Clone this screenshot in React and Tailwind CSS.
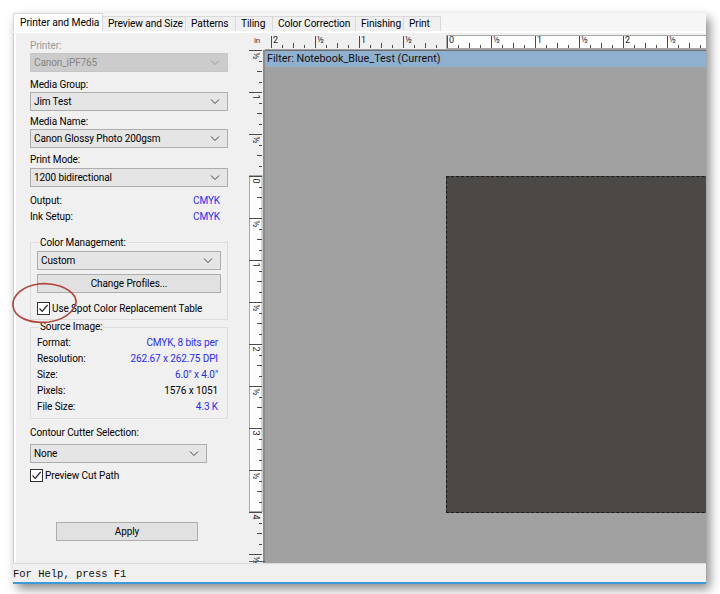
import React from 'react';

function Chevron({ color = '#404040' }) {
  return (
    <svg width="10" height="6" viewBox="0 0 10 6" className="shrink-0">
      <path d="M1 0.5 L5 4.5 L9 0.5" fill="none" stroke={color} strokeWidth="1" />
    </svg>
  );
}

function Combo({ value, disabled, className = '' }) {
  return (
    <div
      className={`flex h-[19px] items-center justify-between border pl-[3px] pr-[7px] ${
        disabled ? 'border-[#c6c6c6] bg-[#cccccc] text-[#858585]' : 'border-[#adadad] bg-[#e5e5e5] text-black'
      } ${className}`}
    >
      <span>{value}</span>
      <Chevron color={disabled ? '#9a9a9a' : '#404040'} />
    </div>
  );
}

function Check() {
  return (
    <div className="flex h-[13px] w-[13px] shrink-0 items-center justify-center border border-[#333333] bg-white">
      <svg width="11" height="11" viewBox="0 0 11 11">
        <path d="M1.5 5.5 L4.2 8.3 L9.6 2" fill="none" stroke="#222" strokeWidth="1.2" />
      </svg>
    </div>
  );
}

function Row({ label, value, blue }) {
  return (
    <div className="flex h-[16px] items-center justify-between">
      <span>{label}</span>
      <span className={blue ? 'text-[#2b2bf5]' : 'text-black'}>{value}</span>
    </div>
  );
}

function TopRuler() {
  const zero = 182;
  const step = 11;
  const items = [];
  for (let k = -16; k <= 23; k++) {
    const x = zero + k * step + 0.5;
    const major = k % 4 === 0;
    const quarter = k % 2 === 0;
    const h = major ? 12 : quarter ? 5 : 3;
    items.push(<line key={'t' + k} x1={x} x2={x} y1={15 - h} y2={15} stroke="#4a4a4a" strokeWidth="1" />);
    if (major) {
      const label = k % 8 === 0 ? String(Math.abs(k / 8)) : '½';
      items.push(
        <text key={'l' + k} x={x + 1.5} y={10} fontSize="9" fill="#222">
          {label}
        </text>
      );
    }
  }
  return (
    <svg width="441" height="17" className="block">
      <rect x="0" y="0" width="441" height="17" fill="#f0f0f0" />
      <rect x={zero - 0.5} y="2.5" width="270" height="13" fill="#ffffff" stroke="#a8a8a8" strokeWidth="1" />
      {items}
      <line x1="0" x2="441" y1="16.5" y2="16.5" stroke="#a0a0a0" />
    </svg>
  );
}

function SideRuler() {
  const zero = 126;
  const step = 10.5;
  const items = [];
  for (let k = -12; k <= 36; k++) {
    const y = Math.round(zero + k * step) + 0.5;
    const major = k % 4 === 0;
    const quarter = k % 2 === 0;
    const len = major ? 13 : quarter ? 5 : 3;
    items.push(<line key={'t' + k} x1={13 - len} x2={13} y1={y} y2={y} stroke="#4a4a4a" strokeWidth="1" />);
    if (major) {
      const label = k % 8 === 0 ? String(Math.abs(k / 8)) : '½';
      items.push(
        <text key={'l' + k} x={0} y={0} fontSize="9" fill="#222" transform={`translate(4 ${y + 2}) rotate(90)`}>
          {label}
        </text>
      );
    }
  }
  return (
    <svg width="16" height="513" className="block shrink-0">
      <rect x="0" y="0" width="16" height="513" fill="#f0f0f0" />
      <rect x="0.5" y={zero - 0.5} width="12.5" height="336" fill="#ffffff" stroke="#a8a8a8" strokeWidth="1" />
      {items}
      <rect x="14" y="0" width="2" height="513" fill="#8c8c8c" />
      <line x1="0" x2="16" y1="511.5" y2="511.5" stroke="#5a5a5a" />
    </svg>
  );
}

const tabs = ['Preview and Size', 'Patterns', 'Tiling', 'Color Correction', 'Finishing', 'Print'];
const tabWidths = ['w-[83px]', 'w-[50px]', 'w-[37px]', 'w-[83px]', 'w-[48px]', 'w-[37px]'];

export default function App() {
  return (
    <div className="relative h-[594px] w-[720px] overflow-hidden bg-white pl-[13px] pt-[13px] font-['Roboto',sans-serif] text-[10px] tracking-[-0.1px] text-black">
      <div className="flex h-[571px] w-[693px] flex-col bg-[#f0f0f0] shadow-[4px_5px_10px_rgba(0,0,0,0.45)]">
        {/* Tabs */}
        <div className="flex h-[18px] shrink-0 items-start whitespace-nowrap bg-[#f6f6f6]">
          <div className="flex h-[18px] w-[90px] items-center border-x border-t border-[#d9d9d9] bg-white pl-[6px] text-[10.3px]">
            Printer and Media
          </div>
          {tabs.map((t, i) => (
            <div
              key={t}
              className={`mt-[3px] flex h-[15px] ${tabWidths[i]} items-center border-r border-t border-[#d9d9d9] bg-[#f0f0f0] pl-[5px] text-[10.2px]`}
            >
              {t}
            </div>
          ))}
        </div>
        <div className="h-[2px] shrink-0 bg-white" />

        {/* Body */}
        <div className="flex h-[530px] shrink-0 border-l border-[#d0d0d0]">
          {/* Left panel */}
          <div className="flex w-[235px] flex-col border-l-2 border-white pl-[14px]">
            <div className="w-[198px]">
              <div className="mt-[5px] flex h-[15px] items-center text-[#9a9a9a]">Printer:</div>
              <Combo value="Canon_iPF765" disabled />
              <div className="mt-[5px] flex h-[15px] items-center">Media Group:</div>
              <Combo value="Jim Test" />
              <div className="mt-[3px] flex h-[15px] items-center">Media Name:</div>
              <Combo value="Canon Glossy Photo 200gsm" />
              <div className="mt-[4px] flex h-[15px] items-center">Print Mode:</div>
              <Combo value="1200 bidirectional" className="mt-[1px]" />

              <div className="mt-[5px] pr-[8px]">
                <Row label="Output:" value="CMYK" blue />
                <Row label="Ink Setup:" value="CMYK" blue />
              </div>

              <fieldset className="mt-[11px] border border-[#dcdcdc] px-[6px] pb-[3px]">
                <legend className="ml-[2px] h-[15px] px-[1px] leading-[15px]">Color Management:</legend>
                <Combo value="Custom" className="mt-[1px]" />
                <div className="mt-[4px] flex h-[19px] items-center justify-center border border-[#adadad] bg-[#e1e1e1]">
                  Change Profiles...
                </div>
                <div className="mt-[8px] flex h-[15px] items-center gap-[2px]">
                  <Check />
                  <span>Use Spot Color Replacement Table</span>
                </div>
              </fieldset>

              <fieldset className="border border-[#dcdcdc] pb-[4px] pl-[6px] pr-[9px]">
                <legend className="ml-[2px] h-[14px] px-[1px] leading-[14px]">Source Image:</legend>
                <Row label="Format:" value="CMYK, 8 bits per" blue />
                <Row label="Resolution:" value="262.67 x 262.75 DPI" blue />
                <Row label="Size:" value={'6.0" x 4.0"'} blue />
                <Row label="Pixels:" value="1576 x 1051" />
                <Row label="File Size:" value="4.3 K" blue />
              </fieldset>

              <div className="mt-[6px] flex h-[15px] items-center">Contour Cutter Selection:</div>
              <Combo value="None" className="mt-[4px] w-[177px]" />
              <div className="mt-[5px] flex h-[15px] items-center gap-[2px]">
                <Check />
                <span>Preview Cut Path</span>
              </div>

              <div className="ml-[26px] mt-[39px] flex h-[19px] w-[142px] items-center justify-center border border-[#adadad] bg-[#e1e1e1]">
                Apply
              </div>
            </div>
          </div>

          {/* Right area */}
          <div className="flex w-[457px] flex-col">
            <div className="flex h-[17px]">
              <div className="flex w-[16px] items-center justify-center bg-[#f0f0f0] pb-[1px] text-[8px] text-[#333]">in</div>
              <TopRuler />
            </div>
            <div className="flex flex-1">
              <SideRuler />
              <div className="flex w-[441px] flex-col border-t border-[#6e6e6e]">
                <div className="flex h-[16px] items-center bg-[#8fb0cf] pl-[2px] text-[10.8px] tracking-normal text-[#111]">
                  Filter: Notebook_Blue_Test (Current)
                </div>
                <div className="relative flex-1 overflow-hidden bg-[#a1a1a1]">
                  <div className="absolute left-[181px] top-[109px] h-[337px] w-[504px] border border-dashed border-[#1a1a1a] bg-[#4b4845]" />
                </div>
              </div>
            </div>
          </div>
        </div>

        {/* Status bar */}
        <div className="flex h-[21px] shrink-0 items-center border-b-2 border-t border-b-[#3c9ad8] border-t-[#dadada] bg-[#f0f0f0] pt-[4px] font-['Liberation_Mono',monospace] text-[10.5px] tracking-normal text-[#111]">
          For Help, press F1
        </div>
      </div>

      {/* Red annotation circle */}
      <svg className="pointer-events-none absolute left-[9px] top-[281px]" width="72" height="46" viewBox="0 0 72 46">
        <path
          d="M28 3 C44 1 60 6 66 16 C70 25 60 38 40 41 C20 43 5 36 4 25 C3 14 14 5 30 3"
          fill="none"
          stroke="#b3443a"
          strokeWidth="1.7"
        />
      </svg>
    </div>
  );
}
